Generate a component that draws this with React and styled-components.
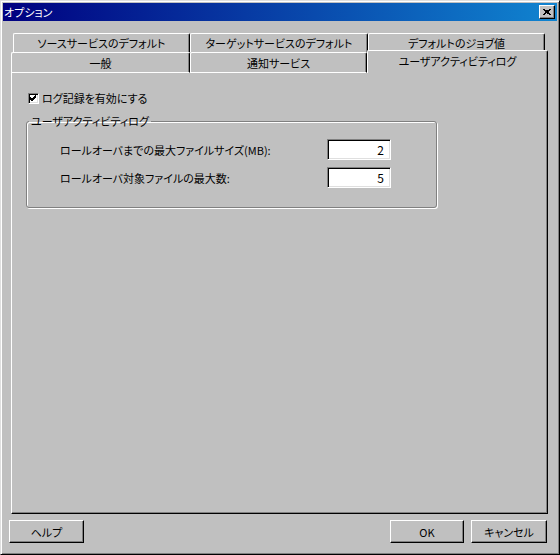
import React from 'react'
import styled, { createGlobalStyle } from 'styled-components'

const GlobalStyle = createGlobalStyle`
    html, body {
        margin: 0;
        padding: 0;
        background: #c0c0c0;
    }
    body {
        font-family: "Noto Sans CJK JP", "Liberation Sans", sans-serif;
        font-size: 11px;
        font-feature-settings: "palt" 1;
        color: #000;
    }
`

const backTabs = [
    { label: 'ソースサービスのデフォルト', width: 177 },
    { label: 'ターゲットサービスのデフォルト', width: 178 },
    { label: 'デフォルトのジョブ値', width: 177 },
]

const frontTabs = [
    { label: '一般', width: 179 },
    { label: '通知サービス', width: 177 },
    { label: 'ユーザアクティビティログ', width: 181, active: true },
]

const App = () => {
    return (
        <>
            <GlobalStyle />
            <Window>
                <TitleBar>
                    <Title>オプション</Title>
                    <CloseButton>
                        <svg width="8" height="7" viewBox="0 0 8 7">
                            <path d="M0 0 L7 6 M1 0 L8 6 M7 0 L0 6 M8 0 L1 6" stroke="#000" strokeWidth="1" shapeRendering="crispEdges" />
                        </svg>
                    </CloseButton>
                </TitleBar>

                <TabRow $offset={10}>
                    {backTabs.map(t => (
                        <Tab key={t.label} $width={t.width}>{t.label}</Tab>
                    ))}
                </TabRow>
                <TabRow $offset={8} $front>
                    {frontTabs.map(t => (
                        <Tab key={t.label} $width={t.width} $front $active={t.active}>{t.label}</Tab>
                    ))}
                </TabRow>

                <Panel>
                    <CheckRow>
                        <CheckBox>
                            <svg width="7" height="7" viewBox="0 0 7 7">
                                <path d="M0 2 L2 4 L6 0 M0 3 L2 5 L6 1 M0 4 L2 6 L6 2" stroke="#000" strokeWidth="1" fill="none" />
                            </svg>
                        </CheckBox>
                        <span>ログ記録を有効にする</span>
                    </CheckRow>

                    <GroupBox>
                        <Legend>ユーザアクティビティログ</Legend>
                        <FieldGrid>
                            <FieldLabel>ロールオーバまでの最大ファイルサイズ(MB):</FieldLabel>
                            <NumberField>2</NumberField>
                            <FieldLabel>ロールオーバ対象ファイルの最大数:</FieldLabel>
                            <NumberField>5</NumberField>
                        </FieldGrid>
                    </GroupBox>
                </Panel>

                <ButtonBar>
                    <Button>ヘルプ</Button>
                    <Spacer />
                    <Button $width={74}>OK</Button>
                    <Button $width={76}>キャンセル</Button>
                </ButtonBar>
            </Window>
        </>
    )
}

const Window = styled.div`
    box-sizing: border-box;
    width: 560px;
    height: 555px;
    padding: 2px;
    background: #c0c0c0;
    border-top: 1px solid #dfdfdf;
    border-left: 1px solid #dfdfdf;
    border-right: 1px solid #000;
    border-bottom: 1px solid #000;
    box-shadow: inset 1px 1px #fff, inset -1px -1px #808080;
    display: flex;
    flex-direction: column;
`

const TitleBar = styled.div`
    height: 18px;
    display: flex;
    align-items: center;
    background: linear-gradient(to right, #000080, #1084d0);
    padding: 0 2px 0 1px;
`

const Title = styled.div`
    color: #fff;
    flex: 1;
    line-height: 18px;
`

const CloseButton = styled.div`
    box-sizing: border-box;
    width: 16px;
    height: 14px;
    background: #c0c0c0;
    border-top: 1px solid #fff;
    border-left: 1px solid #fff;
    border-right: 1px solid #000;
    border-bottom: 1px solid #000;
    box-shadow: inset -1px -1px #808080;
    display: flex;
    align-items: center;
    justify-content: center;
    padding-right: 1px;
`

const TabRow = styled.div`
    display: flex;
    align-items: flex-end;
    margin-left: ${p => p.$offset}px;
    margin-top: ${p => (p.$front ? 0 : 12)}px;
    height: ${p => (p.$front ? 21 : 19)}px;
`

const Tab = styled.div`
    box-sizing: border-box;
    width: ${p => p.$width}px;
    height: ${p => (p.$active ? 23 : p.$front ? 21 : 19)}px;
    ${p => p.$active && 'margin-top: -2px;'}
    position: relative;
    z-index: ${p => (p.$active ? 2 : 1)};
    border-top: 1px solid #fff;
    border-left: 1px solid #fff;
    border-right: 1px solid #000;
    border-bottom: ${p => (p.$front && !p.$active ? '1px solid #fff' : 'none')};
    border-radius: 2px 2px 0 0;
    box-shadow: inset -1px 0 #808080;
    background: #c0c0c0;
    display: flex;
    align-items: center;
    justify-content: center;
    padding-bottom: ${p => (p.$active ? 3 : 0)}px;
    white-space: nowrap;
`

const Panel = styled.div`
    box-sizing: border-box;
    width: 537px;
    height: 441px;
    margin-left: 8px;
    border-left: 1px solid #fff;
    border-right: 1px solid #000;
    border-bottom: 1px solid #000;
    box-shadow: inset -1px -1px #808080;
    padding: 17px 0 0 14px;
    display: flex;
    flex-direction: column;
    align-items: flex-start;
`

const CheckRow = styled.div`
    display: flex;
    align-items: center;
    gap: 3px;
    height: 16px;
    margin-left: 2px;
`

const CheckBox = styled.div`
    box-sizing: border-box;
    width: 11px;
    height: 11px;
    background: #fff;
    border-top: 1px solid #808080;
    border-left: 1px solid #808080;
    border-right: 1px solid #fff;
    border-bottom: 1px solid #fff;
    box-shadow: inset 1px 1px #000, inset -1px -1px #dfdfdf;
    display: flex;
    align-items: center;
    justify-content: center;
`

const GroupBox = styled.fieldset`
    box-sizing: border-box;
    width: 411px;
    margin: 8px 0 0 0;
    padding: 0 0 19px 0;
    border: 1px solid #808080;
    border-radius: 3px;
    box-shadow: 1px 1px 0 #fff, inset 1px 1px 0 #fff;
`

const Legend = styled.legend`
    padding: 0 2px;
    margin-left: 2px;
    line-height: 14px;
`

const FieldGrid = styled.div`
    display: grid;
    grid-template-columns: 267px 64px;
    row-gap: 7px;
    align-items: center;
    padding: 11px 0 0 33px;
`

const FieldLabel = styled.div`
    white-space: nowrap;
`

const NumberField = styled.div`
    box-sizing: border-box;
    height: 21px;
    background: #fff;
    border-top: 1px solid #808080;
    border-left: 1px solid #808080;
    border-right: 1px solid #fff;
    border-bottom: 1px solid #fff;
    box-shadow: inset 1px 1px #000, inset -1px -1px #dfdfdf;
    text-align: right;
    padding-right: 6px;
    line-height: 19px;
    font-size: 12px;
`

const ButtonBar = styled.div`
    display: flex;
    gap: 7px;
    margin: 6px 10px 0 6px;
`

const Spacer = styled.div`
    flex: 1;
`

const Button = styled.div`
    box-sizing: border-box;
    width: ${p => p.$width || 75}px;
    height: 23px;
    border-top: 1px solid #fff;
    border-left: 1px solid #fff;
    border-right: 1px solid #000;
    border-bottom: 1px solid #000;
    box-shadow: inset -1px -1px #808080;
    display: flex;
    align-items: center;
    justify-content: center;
`

export default App
